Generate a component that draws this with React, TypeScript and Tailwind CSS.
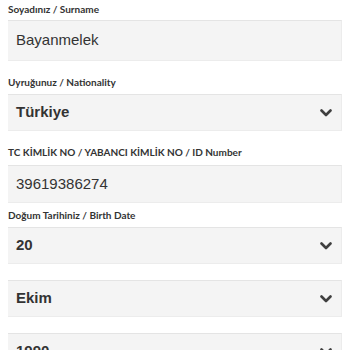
const Chevron = () => (
  <svg className="w-[12px] h-[8px]" viewBox="0 0 12 8" fill="none">
    <polyline points="1.5,1.5 6,6 10.5,1.5" stroke="#3f3f3f" strokeWidth={2.6} strokeLinecap="round" strokeLinejoin="round" />
  </svg>
);

const labelCls = "shrink-0 px-2 h-[12px] leading-[12px] text-[10px] font-bold text-[#333] font-['Lato',sans-serif] whitespace-nowrap";
const boxCls = "shrink-0 mx-2 flex items-center justify-between bg-[#f4f4f4] border-t border-t-[#e4e4e4] border-b border-b-[#ececec] border-r border-r-[#ececec] pl-2 pr-[9px] text-[15px] text-[#333] font-['Liberation_Sans',Arial,sans-serif]";

export default function App() {
  return (
    <div className="w-[350px] h-[350px] overflow-hidden bg-white flex flex-col">
      <div className={`${labelCls} mt-[3px]`}>Soyadınız / Surname</div>
      <div className={`${boxCls} mt-[5px] h-[41px]`}>
        <span>Bayanmelek</span>
      </div>

      <div className={`${labelCls} mt-[15px]`}>Uyruğunuz / Nationality</div>
      <div className={`${boxCls} mt-[6px] h-[37px] font-bold`}>
        <span>Türkiye</span>
        <Chevron />
      </div>

      <div className={`${labelCls} mt-[15px]`}>TC KİMLİK NO / YABANCI KİMLİK NO / ID Number</div>
      <div className={`${boxCls} mt-[7px] h-[38px]`}>
        <span>39619386274</span>
      </div>

      <div className={`${labelCls} mt-[6px]`}>Doğum Tarihiniz / Birth Date</div>
      <div className={`${boxCls} mt-[6px] h-[37px] font-bold`}>
        <span>20</span>
        <Chevron />
      </div>
      <div className={`${boxCls} mt-[16px] h-[37px] font-bold`}>
        <span>Ekim</span>
        <Chevron />
      </div>
      <div className={`${boxCls} mt-[16px] h-[37px] font-bold`}>
        <span>1990</span>
        <Chevron />
      </div>
    </div>
  );
}
